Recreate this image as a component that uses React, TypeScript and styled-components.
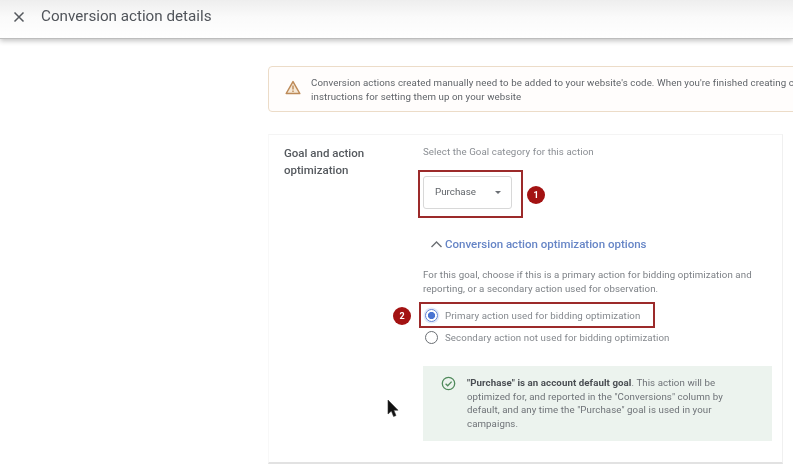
import React from "react";
import styled, { createGlobalStyle } from "styled-components";

const Global = createGlobalStyle`
  html, body { margin: 0; padding: 0; background: #fff; }
  body { width: 793px; height: 467px; overflow: hidden; font-family: Roboto, "Liberation Sans", sans-serif; }
`;
const Page = styled.div`
  position: relative;
  width: 793px;
  height: 467px;
  overflow: hidden;
  background: #fff;
  filter: blur(0.35px);
`;
const Header = styled.header`
  height: 38px;
  display: flex;
  align-items: center;
  padding: 0 0 0 13px;
  gap: 16px;
  background: linear-gradient(#eeeeee, #fafafa 45%, #ffffff);
  border-bottom: 1px solid #bdbdbd;
  box-shadow: 0 2px 5px rgba(0, 0, 0, 0.24);
  position: relative;
`;
const CloseIcon = styled.svg`
  width: 12px;
  height: 12px;
  flex: none;
  margin-top: -4px;
`;
const Title = styled.h1`
  margin: 0 0 6px;
  font-size: 15.2px;
  font-weight: 400;
  color: #50545a;
  white-space: nowrap;
`;
const Main = styled.main`
  padding: 27px 0 0 268px;
  display: flex;
  flex-direction: column;
  gap: 22px;
`;
const BannerClip = styled.div`
  width: 525px;
  overflow: hidden;
`;
const Banner = styled.section`
  width: 560px;
  height: 46px;
  box-sizing: border-box;
  display: flex;
  align-items: center;
  gap: 10px;
  padding-left: 16px;
  border: 1px solid #ecdcc8;
  border-radius: 4px;
  background: #fffdfc;
`;
const WarnIcon = styled.svg`
  width: 16px;
  height: 15px;
  flex: none;
  margin-top: -3px;
`;
const BannerText = styled.p`
  margin: 1px 0 0;
  font-size: 9.7px;
  line-height: 14px;
  color: #5f6368;
  white-space: nowrap;
  letter-spacing: 0.1px;
`;
const Card = styled.section`
  width: 515px;
  height: 330px;
  box-sizing: border-box;
  display: grid;
  grid-template-columns: 154px 1fr;
  border-top: 1px solid #f4f4f4;
  border-right: 1px solid #f0f0f0;
  border-left: 1px solid #f8f8f8;
  border-bottom: 2px solid #e2e2e2;
`;
const SectionName = styled.h2`
  margin: 0;
  padding: 10px 0 0 15px;
  font-size: 11.5px;
  line-height: 17px;
  font-weight: 500;
  color: #55595e;
`;
const Content = styled.div`
  padding-top: 10px;
  display: flex;
  flex-direction: column;
  align-items: flex-start;
`;
const Hint = styled.p`
  margin: 0;
  font-size: 9.7px;
  line-height: 14px;
  color: #8a8e93;
  letter-spacing: 0.1px;
`;
const Select = styled.div`
  margin-top: 17px;
  width: 89px;
  height: 33px;
  box-sizing: border-box;
  display: flex;
  align-items: center;
  justify-content: space-between;
  padding: 0 10px 3px 11px;
  border: 1px solid #d8d8d8;
  border-radius: 3px;
  font-size: 9.8px;
  color: #5f6368;
`;
const Caret = styled.span`
  width: 0;
  height: 0;
  border-left: 3.5px solid transparent;
  border-right: 3.5px solid transparent;
  border-top: 3.5px solid #6b6f74;
  margin-top: 3px;
`;
const Expander = styled.div`
  margin: 28px 0 0 7px;
  display: flex;
  align-items: center;
  gap: 2px;
  font-size: 11.5px;
  font-weight: 500;
  color: #6685c6;
  white-space: nowrap;
`;
const Chevron = styled.svg`
  width: 13px;
  height: 9px;
  flex: none;
`;
const Description = styled(Hint)`
  margin-top: 17px;
  width: 345px;
  color: #7d8186;
`;
const RadioRow = styled.label`
  display: flex;
  align-items: center;
  gap: 7px;
  height: 22px;
  margin-left: 2px;
  font-size: 9.7px;
  letter-spacing: 0.1px;
  color: #84888d;
  white-space: nowrap;
`;
const RadioGroup = styled.div`
  margin-top: 8px;
  display: flex;
  flex-direction: column;
`;
const RadioDot = styled.span<{ $on?: boolean }>`
  width: 13px;
  height: 13px;
  box-sizing: border-box;
  border-radius: 50%;
  flex: none;
  border: 1.5px solid ${(p) => (p.$on ? "#5f82d2" : "#6b6f74")};
  background: ${(p) => (p.$on ? "radial-gradient(circle, #4a74d2 0 3.4px, #fff 3.8px)" : "#fff")};
  box-shadow: ${(p) => (p.$on ? "0 0 0 1.5px #e4eaf8" : "none")};
`;
const Notice = styled.div`
  margin-top: 18px;
  width: 349px;
  height: 75px;
  box-sizing: border-box;
  padding: 10px 0 0 18px;
  display: flex;
  gap: 11px;
  background: #ecf3ee;
`;
const CheckIcon = styled.svg`
  width: 15px;
  height: 15px;
  flex: none;
`;
const NoticeText = styled.p`
  margin: 0;
  width: 268px;
  font-size: 9.7px;
  line-height: 13.7px;
  color: #6e7277;
  letter-spacing: 0.08px;
  strong { color: #4a4e53; font-weight: 700; }
`;
const Highlight = styled.div<{ $x: number; $y: number; $w: number; $h: number }>`
  position: absolute;
  left: ${(p) => p.$x}px;
  top: ${(p) => p.$y}px;
  width: ${(p) => p.$w}px;
  height: ${(p) => p.$h}px;
  box-sizing: border-box;
  border: 2px solid #9c2a2a;
`;
const Badge = styled.div<{ $x: number; $y: number }>`
  position: absolute;
  left: ${(p) => p.$x}px;
  top: ${(p) => p.$y}px;
  width: 18px;
  height: 18px;
  border-radius: 50%;
  background: #a31212;
  color: #fff;
  font-size: 9px;
  font-weight: 700;
  display: flex;
  align-items: center;
  justify-content: center;
`;
const Cursor = styled.svg`
  position: absolute;
  left: 387px;
  top: 399px;
  width: 13px;
  height: 19px;
`;

export default function App() {
  return (
    <Page>
      <Global />
      <Header>
        <CloseIcon viewBox="0 0 12 12">
          <path d="M1.5 1.5 10.5 10.5M10.5 1.5 1.5 10.5" stroke="#55595e" strokeWidth="1.5" fill="none" />
        </CloseIcon>
        <Title>Conversion action details</Title>
      </Header>
      <Main>
        <BannerClip>
          <Banner>
            <WarnIcon viewBox="0 0 16 15">
              <path d="M8 1.6 14.8 13.5H1.2Z" fill="#f6e8d6" stroke="#bd8a58" strokeWidth="1.5" strokeLinejoin="round" />
              <path d="M8 5.6V9.6M8 10.6V12" stroke="#bd8a58" strokeWidth="1.4" />
            </WarnIcon>
            <BannerText>
              Conversion actions created manually need to be added to your website's code. When you're finished creating c
              <br />
              instructions for setting them up on your website
            </BannerText>
          </Banner>
        </BannerClip>
        <Card>
          <SectionName>
            Goal and action
            <br />
            optimization
          </SectionName>
          <Content>
            <Hint>Select the Goal category for this action</Hint>
            <Select>
              Purchase
              <Caret />
            </Select>
            <Expander>
              <Chevron viewBox="0 0 13 9">
                <path d="M1.5 7 6.5 2 11.5 7" stroke="#6b6f74" strokeWidth="1.4" fill="none" />
              </Chevron>
              Conversion action optimization options
            </Expander>
            <Description>
              For this goal, choose if this is a primary action for bidding optimization and reporting, or a secondary action used for observation.
            </Description>
            <RadioGroup>
              <RadioRow>
                <RadioDot $on />
                Primary action used for bidding optimization
              </RadioRow>
              <RadioRow>
                <RadioDot />
                Secondary action not used for bidding optimization
              </RadioRow>
            </RadioGroup>
            <Notice>
              <CheckIcon viewBox="0 0 15 15">
                <circle cx="7.5" cy="7.5" r="6.2" fill="none" stroke="#4f8a5b" strokeWidth="1.3" />
                <path d="M4.6 7.8 6.7 9.8 10.6 5.6" fill="none" stroke="#4f8a5b" strokeWidth="1.3" />
              </CheckIcon>
              <NoticeText>
                <strong>"Purchase" is an account default goal</strong>. This action will be optimized for, and reported in the "Conversions" column by default, and any time the "Purchase" goal is used in your campaigns.
              </NoticeText>
            </Notice>
          </Content>
        </Card>
      </Main>
      <Highlight $x={418} $y={170} $w={105} $h={48} />
      <Highlight $x={419} $y={302} $w={236} $h={26} />
      <Badge $x={527} $y={186}>1</Badge>
      <Badge $x={393} $y={307}>2</Badge>
      <Cursor viewBox="0 0 13 19">
        <path d="M1 1V15L4.4 12 6.6 17.5 9 16.5 6.8 11.2H11Z" fill="#111" stroke="#333" strokeWidth="0.6" />
      </Cursor>
    </Page>
  );
}
